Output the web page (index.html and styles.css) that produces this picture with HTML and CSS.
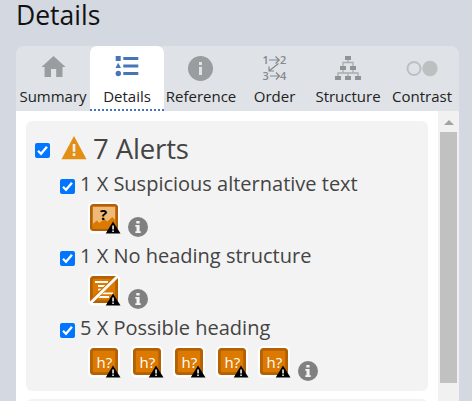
FILE: index.html
```html
<!DOCTYPE html>
<html lang="en">
<head>
<meta charset="utf-8">
<title>Details</title>
<link rel="stylesheet" href="styles.css">
</head>
<body>
<svg width="0" height="0" class="defs">
  <symbol id="check" viewBox="0 0 15 15"><rect width="15" height="15" rx="2" fill="#0075ff"/><path d="M3 7.700l3 3 6-7" fill="none" stroke="#fff" stroke-width="2.300"/></symbol>
  <symbol id="info" viewBox="0 0 20 20"><circle cx="10" cy="10" r="10" fill="#808080"/><path d="M8.300 4h3.300v2.600H8.300zM7.300 8h4.300v6.300h1.200V16H7.300v-1.700h1.200V9.700H7.300z" fill="#f3f3f3"/></symbol>
  <symbol id="tile" viewBox="0 0 32 32"><rect width="32" height="31.500" rx="5" fill="#fff"/><rect x="2" y="2" width="28" height="27" rx="3.500" fill="#b36104"/><rect x="4.800" y="4.800" width="22.400" height="21.400" rx="1" fill="#dc7900"/></symbol>
  <symbol id="badge" viewBox="0 0 32 32"><path d="M25 19.500L32.500 31.600H17.700z" fill="#000"/><path d="M24.300 23.500h1.500v4h-1.500zM24.300 28.500h1.500v1.500h-1.500z" fill="#fff"/></symbol>
</svg>
<h1>Details</h1>
<main>
  <nav>
    <a class="tab"><svg width="26" height="26" viewBox="0 0 26 26"><path d="M13.500 2L25.500 13H22.500V23H16.200V15H11V23H4.600V13H1.500z" fill="#989d9f"/></svg><span>Summary</span></a>
    <a class="tab active"><svg width="26" height="26" viewBox="0 0 26 26"><path d="M1.700 2h5v5h-5zM4.200 8.700L7 14H1.500zM9.300 3h15v3h-15zM9.300 10.500h15v3h-15zM9.300 18h15v3h-15z" fill="#4676b8"/><circle cx="4.300" cy="19.500" r="2.700" fill="#4676b8"/></svg><span>Details</span></a>
    <a class="tab"><svg width="26" height="26" viewBox="0 0 26 26"><circle cx="12.500" cy="14.500" r="12.500" fill="#999d9f"/><path d="M11 8h3v3h-3zM11 12.800h3V21h-3z" fill="#dfe2e6"/></svg><span>Reference</span></a>
    <a class="tab"><svg width="26" height="26" viewBox="0 0 26 26"><g class="digits"><text x="0.500" y="9.500">1</text><text x="18" y="9.500">2</text><text x="0.500" y="25.500">3</text><text x="18" y="25.500">4</text></g><path d="M7 6h10M13.500 2.500L17.200 6l-3.700 3.500M16.500 9.500L7 17M7 12.500V17h5M8 22h9.500M14 18.500l3.500 3.500-3.500 3.500" fill="none" stroke="#85898c" stroke-width="1.200"/></svg><span>Order</span></a>
    <a class="tab"><svg width="26" height="26" viewBox="0 0 26 26"><path d="M10 2h6v4h-6zM5 12h6v4H5zM15 12h6v4h-6zM0 22h6v4H0zM10 22h6v4h-6zM20 22h6v4h-6z" fill="#8f9496"/><path d="M13 6v2.500M8 12V8.500h10V12M8 16v3M18 16v3M3 22v-3h20v3M13 19v3" fill="none" stroke="#a8acae" stroke-width="1.300"/></svg><span>Structure</span></a>
    <a class="tab"><svg width="32" height="26" viewBox="0 0 32 26"><circle cx="8" cy="14.500" r="6.500" fill="none" stroke="#bbc0c1" stroke-width="2"/><circle cx="24" cy="14.500" r="7.700" fill="#bbc0c1"/></svg><span>Contrast</span></a>
  </nav>
  <div class="body">
    <div class="list">
      <section class="card">
        <h2><svg class="check" width="15" height="15"><use href="#check"/></svg><svg class="warn" width="26" height="24" viewBox="0 0 26 24"><path d="M13 0L25.500 23.300H.5z" fill="#e38e15"/><path d="M11.700 8h2.600v7.700h-2.600zM11.700 17.300h2.600V20h-2.600z" fill="#f3f3f3"/></svg><span class="alerts">7 Alerts</span></h2>
        <div class="group">
          <h3><svg class="check" width="15" height="15"><use href="#check"/></svg><span>1 X Suspicious alternative text</span></h3>
          <div class="icons"><svg class="tile" viewBox="0 0 32 32"><use href="#tile"/><path d="M4.800 4.800h22.400v21.400H4.800z" fill="#efb977"/><path d="M4.800 22l4-3.500 2.500 2.500 5-4 3 2.500 5-4.500 2.900 3v8.200H4.800z" fill="#dc7900"/><text x="12" y="18" class="question">?</text><use href="#badge"/></svg><svg class="info" width="20" height="20"><use href="#info"/></svg></div>
        </div>
        <div class="group">
          <h3><svg class="check" width="15" height="15"><use href="#check"/></svg><span>1 X No heading structure</span></h3>
          <div class="icons"><svg class="tile" viewBox="0 0 32 32"><use href="#tile"/><path d="M7 8h13M10 12h9M10 15.700h8M10 19.300h15M8 23h13" fill="none" stroke="#fff" stroke-width="1.800"/><path d="M3.500 27.500L28 3.500" stroke="#c46a00" stroke-width="4.200"/><path d="M2.500 29L30 2" stroke="#fff" stroke-width="2.800"/><use href="#badge"/></svg><svg class="info" width="20" height="20"><use href="#info"/></svg></div>
        </div>
        <div class="group">
          <h3><svg class="check" width="15" height="15"><use href="#check"/></svg><span>5 X Possible heading</span></h3>
          <div class="icons">
            <svg class="tile" viewBox="0 0 32 32"><use href="#tile"/><text x="8.500" y="21.500" class="glyph">h?</text><use href="#badge"/></svg>
            <svg class="tile" viewBox="0 0 32 32"><use href="#tile"/><text x="8.500" y="21.500" class="glyph">h?</text><use href="#badge"/></svg>
            <svg class="tile" viewBox="0 0 32 32"><use href="#tile"/><text x="8.500" y="21.500" class="glyph">h?</text><use href="#badge"/></svg>
            <svg class="tile" viewBox="0 0 32 32"><use href="#tile"/><text x="8.500" y="21.500" class="glyph">h?</text><use href="#badge"/></svg>
            <svg class="tile" viewBox="0 0 32 32"><use href="#tile"/><text x="8.500" y="21.500" class="glyph">h?</text><use href="#badge"/></svg>
            <svg class="info" width="20" height="20"><use href="#info"/></svg>
          </div>
        </div>
      </section>
      <section class="card next"></section>
    </div>
    <div class="scroll"><svg width="10" height="5" viewBox="0 0 10 5"><path d="M5 0l5 5H0z" fill="#a3a3a3"/></svg><div class="thumb"></div></div>
  </div>
</main>
</body>
</html>
```
FILE: styles.css
```css
* { box-sizing: border-box; }
body { margin: 0; width: 472px; height: 401px; overflow: hidden; background: #d4d8e0; font-family: "Open Sans", sans-serif; display: flex; flex-direction: column; }
svg { display: block; flex: none; overflow: visible; }
symbol { overflow: visible; }
.defs { position: absolute; }
h1, h2, h3 { margin: 0; font-weight: 400; white-space: nowrap; }
h1 { height: 46px; flex: none; padding-left: 16px; font-size: 26.500px; line-height: 31px; color: #111; }
main { width: 443px; height: 355px; margin-left: 16px; border-radius: 8px 8px 0 0; overflow: hidden; display: flex; flex-direction: column; background: #dfe2e6; }
nav { display: grid; grid-template-columns: 74px 74px 74px 73px 74px 74px; height: 65px; flex: none; }
.tab { display: flex; flex-direction: column; align-items: center; padding-top: 8px; font-size: 15px; line-height: 20px; color: #222; white-space: nowrap; }
.tab span { margin-top: 6px; }
.active { background: #fff; border-radius: 7px 7px 0 0; border-bottom: 2px dotted #4676b8; }
.digits { font-size: 11px; font-weight: 600; fill: #85898c; }
.body { display: flex; height: 290px; background: #fff; }
.list { width: 422px; padding: 10px; display: flex; flex-direction: column; gap: 8px; }
.card { height: 270px; flex: none; border-radius: 6px; background: #f3f3f3; color: #444; padding-top: 7px; }
h2 { height: 44px; display: flex; align-items: center; padding-left: 9px; font-size: 27.500px; line-height: 38px; letter-spacing: -.12px; }
.alerts { margin-top: -3px; }
.warn { margin: -4px 6px 0 11px; }
.group { height: 72px; padding-left: 34px; }
h3 { display: flex; align-items: center; height: 24px; gap: 5px; font-size: 20px; line-height: 24px; }
h3 .check { margin-top: 5px; }
.icons { display: flex; align-items: flex-start; padding-left: 28px; height: 48px; padding-top: 6px; gap: 10.500px; }
.tile { width: 32px; height: 32px; }
.info { margin: 15px 0 0 -2.500px; }
.glyph { font-size: 15px; fill: #fff; }
.question { font: 700 15px "Open Sans", sans-serif; fill: #000; }
.scroll { width: 21px; background: #f1f1f1; display: flex; flex-direction: column; align-items: center; padding-top: 9px; gap: 7px; }
.thumb { width: 17px; height: 251px; background: #c1c1c1; }
```
